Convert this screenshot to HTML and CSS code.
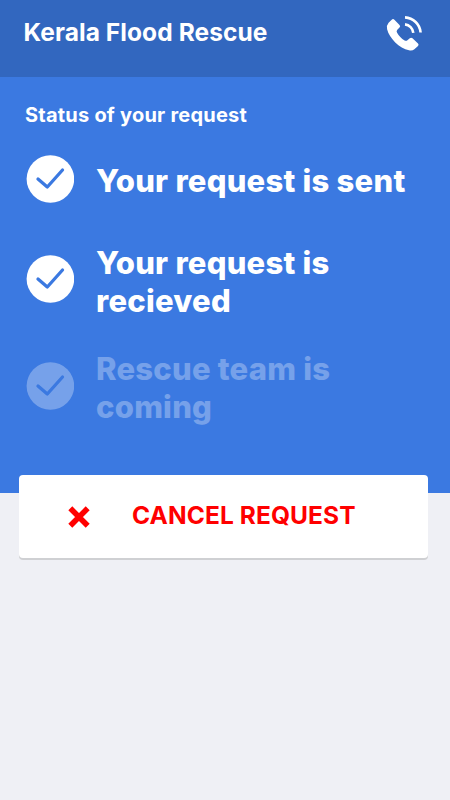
FILE: index.html
```html
<!DOCTYPE html>
<html lang="en">
<head>
<meta charset="utf-8">
<title>Kerala Flood Rescue</title>
<link rel="stylesheet" href="styles.css">
</head>
<body>
<header class="topbar">
  <h1 class="brand">Kerala Flood Rescue</h1>
  <svg class="phone" viewBox="0 0 40 40" fill="none">
    <path fill="#fff" d="M6.7 4.7 Q8.1 3.5 9.4 4.8 L14.5 9.9 Q15.8 11.2 14.5 12.6 L12.3 14.8 Q11 16.2 12.1 17.8 C13.7 20.8 16.5 23.8 19.6 25.5 Q21.3 26.4 22.7 25 L24.8 23.3 Q26.2 22 27.5 23.3 L33 28.4 Q34.2 29.8 33 31 L29.4 34.3 Q27.2 36 24 35.3 C14.4 33.4 4.3 23.1 2.1 14.2 Q1.3 10.4 3.6 7.8 Z"/>
    <path stroke="#fff" stroke-width="2.6" d="M20 9.4 A9.4 9.4 0 0 1 28.3 17.8 M20 2.4 A16.5 16.5 0 0 1 35.6 17.5"/>
  </svg>
</header>
<main>
  <section class="status">
    <h2 class="caption">Status of your request</h2>
    <ul class="steps">
      <li class="step">
        <svg class="check" viewBox="0 0 48 48"><circle cx="24.4" cy="24" r="23.8"/><path d="M12 24 L21.3 32 L36.5 15"/></svg>
        <span class="label">Your request is sent</span>
      </li>
      <li class="step">
        <svg class="check" viewBox="0 0 48 48"><circle cx="24.4" cy="24" r="23.8"/><path d="M12 24 L21.3 32 L36.5 15"/></svg>
        <span class="label">Your request is<br>recieved</span>
      </li>
      <li class="step pending">
        <svg class="check" viewBox="0 0 48 48"><circle cx="24.4" cy="24" r="23.8"/><path d="M12 24 L21.3 32 L36.5 15"/></svg>
        <span class="label">Rescue team is<br>coming</span>
      </li>
    </ul>
  </section>
  <button class="cancel" type="button">
    <svg class="cross" viewBox="0 0 22 22"><path d="M2.3 2.3 L19.7 19.7 M19.7 2.3 L2.3 19.7"/></svg>
    <span>CANCEL REQUEST</span>
  </button>
</main>
</body>
</html>
```
FILE: styles.css
```css
* { box-sizing: border-box; }
body {
  margin: 0;
  min-height: 800px;
  background: #eff0f5;
  color: #fff;
  font-family: Inter, "Liberation Sans", sans-serif;
}
h1, h2, ul { margin: 0; padding: 0; }
.topbar {
  display: flex;
  justify-content: space-between;
  align-items: flex-start;
  height: 77px;
  padding: 14px 25px 0 23.5px;
  background: #3267bf;
}
.brand {
  padding-top: 3px;
  font-size: 24.5px;
  line-height: 30px;
  font-weight: 650;
  letter-spacing: 0.08px;
}
.phone { width: 40px; height: 40px; margin: 0.5px 0.5px 0 0; }
.status {
  height: 416px;
  padding: 25px 0 0 25px;
  background: #3b79e1;
}
.caption {
  font-size: 20px;
  line-height: 26px;
  font-weight: 650;
  letter-spacing: 0.22px;
}
.steps {
  list-style: none;
  margin-top: 27px;
}
.step {
  display: flex;
  align-items: center;
  gap: 22px;
  height: 48px;
  margin: 0 0 52px 1px;
}
.step + .step { margin-bottom: 59px; }
.check {
  flex: none;
  width: 48px;
  height: 48px;
}
.check circle { fill: #fff; }
.check path {
  fill: none;
  stroke: #3b79e1;
  stroke-width: 3.3;
  stroke-linecap: round;
  stroke-linejoin: round;
}
.label {
  padding-top: 3px;
  font-size: 31px;
  line-height: 37.5px;
  font-weight: 800;
  letter-spacing: 0.24px;
  white-space: nowrap;
}
.step + .step .label { padding-top: 5px; }
.pending { opacity: 0.3; }
.step.pending .label { padding-top: 3px; }
.cancel {
  display: flex;
  align-items: center;
  width: 409px;
  height: 83px;
  margin: -18px 0 0 19px;
  padding: 0 0 2px 48.5px;
  gap: 42.5px;
  border: 0;
  border-radius: 4px;
  background: #fff;
  box-shadow: 0 2px 0 #cfd0d3;
  color: #f00;
  font-family: inherit;
  font-size: 24.5px;
  font-weight: 650;
  letter-spacing: 0.1px;
}
.cancel span { padding-bottom: 1px; }
.cross { width: 22px; height: 22px; margin-top: 3px; }
.cross path { stroke: #f00; stroke-width: 5.6; }
```
